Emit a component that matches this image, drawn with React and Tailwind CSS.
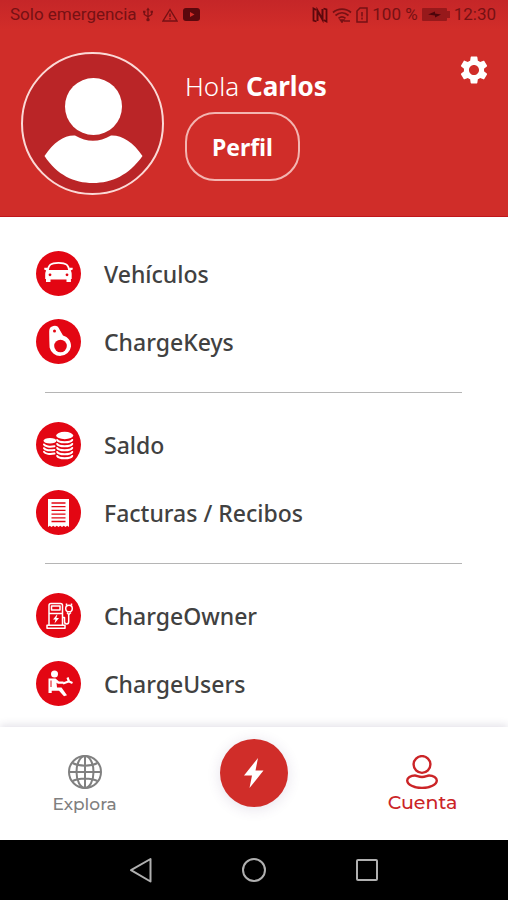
const disc = "size-[45px] shrink-0";

function CarIcon() {
  return (
    <svg viewBox="0 0 45 45" className={disc} aria-hidden="true">
      <circle cx="22.5" cy="22.5" r="22.5" fill="#e30613" />
      <path d="M11.5 20 C12.5 14 14.5 11.8 22.5 11.8 C30.5 11.8 32.5 14 33.5 20" fill="none" stroke="#fff" strokeWidth="1.8" />
      <path d="M8.3 16.8 h3 l1.2 2.2 h20 l1.2-2.2 h3 v1.8 l-2 .8 c1 1.6 1 3 1 5 v3.6 h-.8 v3 h-4.4 v-2.6 H14.5 v2.6 H10 v-3 h-.8 v-3.6 c0-2 0-3.4 1-5 l-2-.8z" fill="#fff" />
      <circle cx="14" cy="23.8" r="1.4" fill="#e30613" />
      <circle cx="31" cy="23.8" r="1.4" fill="#e30613" />
    </svg>
  );
}

function KeyFobIcon() {
  return (
    <svg viewBox="0 0 45 45" className={disc} aria-hidden="true">
      <circle cx="22.5" cy="22.5" r="22.5" fill="#e30613" />
      <path d="M13.2 12.5 A5.3 5.3 0 0 1 23.4 10.2 L27 16.5 C32 18 35.3 22 35 27.5 A10.9 10.9 0 0 1 13.6 28.5 C13.4 24 13.2 18 13.2 12.5z" fill="#fff" />
      <circle cx="24.5" cy="27" r="6.3" fill="#e30613" />
      <circle cx="18.5" cy="12" r="1.5" fill="#e30613" />
    </svg>
  );
}

function CoinsIcon() {
  return (
    <svg viewBox="0 0 45 45" className={disc} aria-hidden="true">
      <circle cx="22.5" cy="22.5" r="22.5" fill="#e30613" />
      <g fill="#fff">
        <ellipse cx="14" cy="18.8" rx="6.5" ry="2.8" />
        <ellipse cx="28.7" cy="13.5" rx="8.5" ry="3.7" />
      </g>
      <g fill="none" stroke="#fff" strokeWidth="2" strokeLinecap="round">
        <path d="M8 22.5 c1 2 6 2.7 10.5 1.7" />
        <path d="M8 26.2 c1 2 6 2.7 10.5 1.7" />
        <path d="M8 29.9 c1 2 6 2.7 10.5 1.7" />
        <path d="M21.2 18 c1.5 3 13.5 3 15 0" />
        <path d="M21.2 22 c1.5 3 13.5 3 15 0" />
        <path d="M21.2 26 c1.5 3 13.5 3 15 0" />
        <path d="M21.2 30 c1.5 3 13.5 3 15 0" />
        <path d="M21.2 34 c1.5 3 13.5 3 15 0" />
      </g>
    </svg>
  );
}

function ReceiptIcon() {
  return (
    <svg viewBox="0 0 45 45" className={disc} aria-hidden="true">
      <circle cx="22.5" cy="22.5" r="22.5" fill="#e30613" />
      <path d="M12 9 H33 V37 l-1.75-1.2 l-1.75 1.2 l-1.75-1.2 l-1.75 1.2 l-1.75-1.2 l-1.75 1.2 l-1.75-1.2 l-1.75 1.2 l-1.75-1.2 l-1.75 1.2 l-1.75-1.2 l-1.75 1.2z" fill="#fff" />
      <path d="M15.5 13 H29.5 M15.5 16.7 H29.5 M15.5 20.4 H29.5 M15.5 24.1 H29.5 M15.5 27.8 H29.5 M15.5 31.5 H29.5" stroke="#e30613" strokeWidth="1.3" />
    </svg>
  );
}

function ChargerIcon() {
  return (
    <svg viewBox="0 0 45 45" className={disc} aria-hidden="true">
      <circle cx="22.5" cy="22.5" r="22.5" fill="#e30613" />
      <g fill="none" stroke="#fff" strokeWidth="1.5" strokeLinejoin="round">
        <path d="M13 32 V12.5 q0-2 2-2 h9.5 q2 0 2 2 V32" />
        <rect x="15.5" y="13" width="8.5" height="4" />
        <path d="M13 20.5 H26.5" />
        <rect x="11" y="32.2" width="18" height="3" />
        <path d="M26.5 24.5 h2 v4 q0 2.5 2.3 2.5 q1.9 0 1.9-2.5 V21" />
        <circle cx="33" cy="15.5" r="3.3" />
        <path d="M30.5 10.5 v2 M35.5 10.5 v2 M31 19.5 l1.7 2 l2.3-2" />
      </g>
      <path d="M21 21.5 l-4 5 h2.5 l-1 4 l4.5-5.5 h-2.6 l1-3.5z" fill="#fff" />
    </svg>
  );
}

function DriverIcon() {
  return (
    <svg viewBox="0 0 45 45" className={disc} aria-hidden="true">
      <circle cx="22.5" cy="22.5" r="22.5" fill="#e30613" />
      <circle cx="18.5" cy="13" r="3.5" fill="#fff" />
      <path d="M12.5 17.5 h7 l3.5 3 h4.5 v2.2 h-5.5 l-1.5-1 l.5 4.8 h4.5 l5.5 7.8 l-3 1 l-5-5.5 h-7.3 v2.2 h-3.2z" fill="#fff" />
      <path d="M15 19.5 v6.5" stroke="#e30613" strokeWidth="1" />
      <path d="M27 22.5 l5.5-2 M31.5 16.5 l1.5 4 l3.5 1.5" fill="none" stroke="#fff" strokeWidth="2.2" />
    </svg>
  );
}

const sections = [
  [
    { label: "Vehículos", icon: CarIcon },
    { label: "ChargeKeys", icon: KeyFobIcon },
  ],
  [
    { label: "Saldo", icon: CoinsIcon },
    { label: "Facturas / Recibos", icon: ReceiptIcon },
  ],
  [
    { label: "ChargeOwner", icon: ChargerIcon },
    { label: "ChargeUsers", icon: DriverIcon },
  ],
];

function StatusBar() {
  return (
    <div className="flex h-[30px] items-center justify-between bg-linear-to-b from-[#c52628] to-[#d22d29] pr-3 pb-px pl-[10px] font-[Roboto,sans-serif] text-[17px] text-[#761114]">
      <div className="flex items-center gap-2">
        <span>Solo emergencia</span>
        {/* USB, warning, video */}
        <svg viewBox="0 0 12 16" className="-ml-[3px] h-[15px] w-3" fill="none" stroke="currentColor" strokeWidth="1.4" aria-hidden="true">
          <path d="M6 2 V13 M2 5 V8 L6 10.5 L10 8 V5" />
          <path d="M4 3.5 L6 .5 L8 3.5z" fill="currentColor" stroke="none" />
          <circle cx="6" cy="13.5" r="1.8" fill="currentColor" stroke="none" />
          <path d="M.7 4 h2.6 v2 H.7z M8.7 4 h2.6 v2 H8.7z" fill="currentColor" stroke="none" />
        </svg>
        <svg viewBox="0 0 16 14" className="h-[14px] w-4" fill="none" stroke="currentColor" strokeWidth="1.4" aria-hidden="true">
          <path d="M8 1.5 L15 13 H1z M8 5.5 V9 M8 10 v1.5" />
        </svg>
        <svg viewBox="0 0 17 13" className="-ml-[3px] h-[13px] w-[17px]" aria-hidden="true">
          <rect width="17" height="13" rx="3" fill="#5c080d" />
          <path d="M7 4 L11.5 6.5 L7 9z" fill="#d22d29" />
        </svg>
      </div>
      <div className="flex items-center gap-1">
        <svg viewBox="0 0 16 16" className="size-4" fill="none" stroke="#5c080d" aria-hidden="true">
          <path d="M4.5 14.5 L1.5 13.5 V1.5 L4.5 3 M11.5 1.5 L14.5 2.5 V14.5 L11.5 13" strokeWidth="1.8" />
          <path d="M5.5 14 V3.5 L10.5 12.5 V2" strokeWidth="2" />
        </svg>
        <svg viewBox="0 0 20 16" className="h-4 w-5" fill="none" stroke="currentColor" strokeWidth="1.7" aria-hidden="true">
          <path d="M1 5.5 C6 1 14 1 19 5.5 M3.5 8.5 C7.5 5 12.5 5 16.5 8.5 M6.5 11.3 C9 9.3 11 9.3 13.5 11.3" />
          <path d="M8.5 13 L10 15 L11.5 13z M12 14 h6" />
        </svg>
        <svg viewBox="0 0 12 16" className="h-4 w-3" fill="none" stroke="currentColor" strokeWidth="1.5" aria-hidden="true">
          <path d="M4 1 H11 V15 H1 V4z M6 5 V9.5 M6 10.5 V12.5" />
        </svg>
        <span>100 %</span>
        <svg viewBox="0 0 28 13" className="h-[13px] w-7" aria-hidden="true">
          <rect width="25" height="13" rx="1" fill="#97191b" />
          <rect x="25" y="3" width="3" height="7" fill="#97191b" />
          <path d="M6 6.5 L13 3.5 V5.5 L19 6.5 L13 9.5 V7.5z" fill="#4d050b" />
        </svg>
        <span>12:30</span>
      </div>
    </div>
  );
}

function Header() {
  return (
    <header className="flex items-start border-b border-[#c0161b] bg-[#d02d29] pt-[22px] pr-5 pb-[21px] pl-[21px]">
      <svg viewBox="0 0 143 143" className="size-[143px] shrink-0" role="img" aria-label="Carlos">
        <circle cx="71.5" cy="71.5" r="70.5" fill="#ba2527" stroke="#fbd9d6" strokeWidth="2" />
        <path d="M23.5 104 C33 90 43 83 54 83.5 C66 90.5 78 90.5 90 83.5 C101 83 112 90 121.5 104 C108 123 91 131 72 131 C53 131 36 123 23.5 104z" fill="#fff" />
        <circle cx="72.5" cy="54.5" r="28.5" fill="#fff" />
      </svg>
      <div className="ml-[21px] pt-4">
        <h1 className="text-[26px] leading-9 text-white">
          <span className="font-light">Hola</span> <b className="font-bold">Carlos</b>
        </h1>
        <button className="mt-2 h-[69px] w-[115px] rounded-[30px] border-2 border-[#f3b5b1] pt-0.5 text-[23px] font-bold text-white">
          Perfil
        </button>
      </div>
      <button aria-label="Ajustes" className="mt-1 ml-auto">
        <svg viewBox="2 2 20 20" className="size-7" fill="#fff" aria-hidden="true">
          <path d="M19.14 12.94c.04-.3.06-.61.06-.94 0-.32-.02-.64-.07-.94l2.03-1.58c.18-.14.23-.41.12-.61l-1.92-3.32c-.12-.22-.37-.29-.59-.22l-2.39.96c-.5-.38-1.03-.7-1.62-.94l-.36-2.54c-.04-.24-.24-.41-.48-.41h-3.84c-.24 0-.43.17-.47.41l-.36 2.54c-.59.24-1.13.57-1.62.94l-2.39-.96c-.22-.08-.47 0-.59.22L2.74 8.87c-.12.21-.08.47.12.61l2.03 1.58c-.05.3-.09.63-.09.94s.02.64.07.94l-2.03 1.58c-.18.14-.23.41-.12.61l1.92 3.32c.12.22.37.29.59.22l2.39-.96c.5.38 1.03.7 1.62.94l.36 2.54c.05.24.24.41.48.41h3.84c.24 0 .44-.17.47-.41l.36-2.54c.59-.24 1.13-.56 1.62-.94l2.39.96c.22.08.47 0 .59-.22l1.92-3.32c.12-.22.07-.47-.12-.61l-2.01-1.58zM12 15.6c-1.98 0-3.6-1.62-3.6-3.6s1.62-3.6 3.6-3.6 3.6 1.62 3.6 3.6-1.62 3.6-3.6 3.6z" />
        </svg>
      </button>
    </header>
  );
}

function Menu() {
  return (
    <main className="flex-1 pt-[22px] pr-[46px] pb-[10px] pl-9">
      {sections.map((items, i) => (
        <section key={i}>
          {i > 0 && <hr className="my-[17px] ml-[9px] border-[#b5b5b5]" />}
          {items.map(({ label, icon: Icon }) => (
            <a key={label} href="#" className="flex h-[68px] items-center gap-[23px] text-[23px] font-medium text-[#414141]">
              <Icon />
              <span className="pt-0.5">{label}</span>
            </a>
          ))}
        </section>
      ))}
    </main>
  );
}

function TabBar() {
  return (
    <nav className="grid h-[113px] grid-cols-3 justify-items-center bg-white pr-px font-[Montserrat,Inter,sans-serif] font-medium shadow-[0_-2px_8px_rgba(60,40,90,0.14)]">
      <a href="#" className="flex flex-col items-center gap-[3px] pt-7 text-[17px] leading-6 text-[#808080]">
        <svg viewBox="0 0 34 34" className="size-[34px]" fill="none" stroke="currentColor" strokeWidth="2" aria-hidden="true">
          <circle cx="17" cy="17" r="16" />
          <ellipse cx="17" cy="17" rx="8.5" ry="16" />
          <path d="M17 1 V33 M1 17 H33 M4.5 8 C11 11.5 23 11.5 29.5 8 M4.5 26 C11 22.5 23 22.5 29.5 26" />
        </svg>
        Explora
      </a>
      <button aria-label="Cargar" className="mt-3 flex size-[68px] items-center justify-center rounded-full bg-[#d02d29] shadow-[0_2px_14px_rgba(80,50,110,0.14)]">
        <svg viewBox="0 0 20 32" className="h-8 w-5" fill="#fff" aria-hidden="true">
          <path d="M14 1 L0 18.5 H8 L5.5 31 L19.5 13.5 H11.5z" />
        </svg>
      </button>
      <a href="#" aria-current="page" className="flex flex-col items-center gap-[2px] pt-7 text-[19px] leading-6 text-[#cb2427]">
        <svg viewBox="0 0 32 34" className="h-[34px] w-8" fill="none" stroke="currentColor" strokeWidth="2.4" aria-hidden="true">
          <circle cx="16" cy="9.5" r="8.4" />
          <path d="M9 20.5 C11 20.5 12.5 22 16 22 C19.5 22 21 20.5 23 20.5 C27.5 20.5 30.8 23 30.8 25.5 C30.8 29.5 24 33 16 33 C8 33 1.2 29.5 1.2 25.5 C1.2 23 4.5 20.5 9 20.5z" />
        </svg>
        Cuenta
      </a>
    </nav>
  );
}

function SystemBar() {
  return (
    <div className="flex h-[60px] items-center justify-center gap-[89px] bg-black">
      <button aria-label="Atrás">
        <svg viewBox="0 0 24 26" className="h-[26px] w-6" fill="none" stroke="#b0b0b0" strokeWidth="2" strokeLinejoin="round" aria-hidden="true">
          <path d="M21.5 2 V24.5 L2 13.2z" />
        </svg>
      </button>
      <button aria-label="Inicio">
        <svg viewBox="0 0 24 24" className="size-6" fill="none" stroke="#b0b0b0" strokeWidth="2" aria-hidden="true">
          <circle cx="12" cy="12" r="11" />
        </svg>
      </button>
      <button aria-label="Recientes">
        <svg viewBox="0 0 24 24" className="size-6" fill="none" stroke="#b0b0b0" strokeWidth="2" aria-hidden="true">
          <rect x="2" y="2" width="20" height="20" rx="1" />
        </svg>
      </button>
    </div>
  );
}

export default function App() {
  return (
    <div className="flex min-h-screen flex-col bg-white font-['Noto_Sans',sans-serif]">
      <StatusBar />
      <Header />
      <Menu />
      <TabBar />
      <SystemBar />
    </div>
  );
}
